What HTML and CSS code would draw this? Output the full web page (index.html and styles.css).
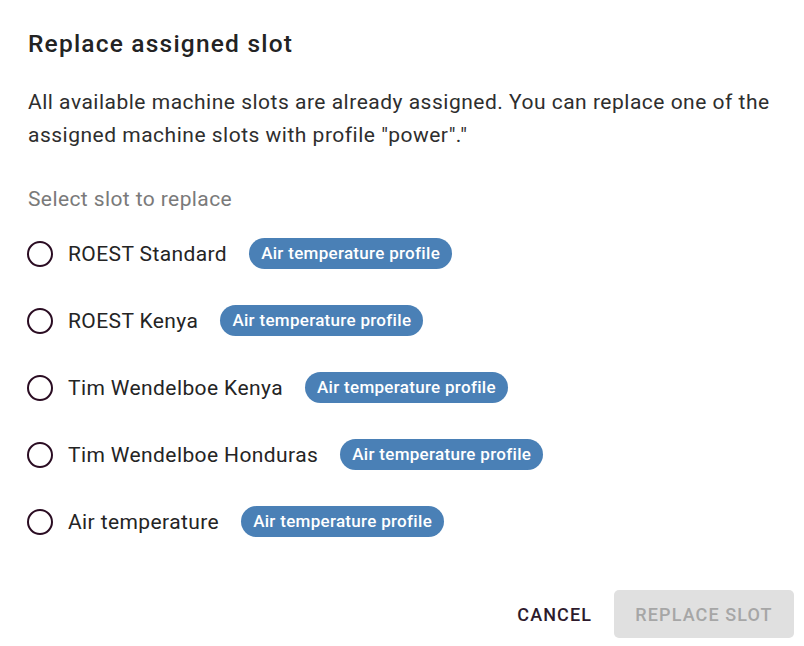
FILE: index.html
```html
<!DOCTYPE html>
<html lang="en">
<head>
<meta charset="utf-8">
<title>Replace assigned slot</title>
<link rel="stylesheet" href="styles.css">
</head>
<body>
<div class="dialog">
  <h2 class="title">Replace assigned slot</h2>
  <p class="text">All available machine slots are already assigned. You can replace one of the assigned machine slots with profile "power"."</p>
  <div class="label">Select slot to replace</div>
  <div class="options">
    <label class="option"><span class="radio"></span><span class="name">ROEST Standard</span><span class="chip">Air temperature profile</span></label>
    <label class="option"><span class="radio"></span><span class="name">ROEST Kenya</span><span class="chip">Air temperature profile</span></label>
    <label class="option"><span class="radio"></span><span class="name">Tim Wendelboe Kenya</span><span class="chip">Air temperature profile</span></label>
    <label class="option"><span class="radio"></span><span class="name">Tim Wendelboe Honduras</span><span class="chip">Air temperature profile</span></label>
    <label class="option"><span class="radio"></span><span class="name">Air temperature</span><span class="chip">Air temperature profile</span></label>
  </div>
  <div class="actions">
    <button class="btn btn-text">CANCEL</button>
    <button class="btn btn-disabled" disabled>REPLACE SLOT</button>
  </div>
</div>
</body>
</html>
```
FILE: styles.css
```css
html, body {
  margin: 0;
  padding: 0;
  background: #fff;
}
body {
  font-family: Roboto, "Noto Sans", sans-serif;
  color: rgba(0, 0, 0, 0.87);
}
.dialog {
  padding: 28px 10px 9px 28px;
  display: flex;
  flex-direction: column;
}
.title {
  margin: 0;
  font-size: 24.5px;
  font-weight: 500;
  letter-spacing: 1.2px;
  line-height: 32px;
  color: #232323;
}
.text {
  margin: 26px 0 0;
  font-size: 21px;
  letter-spacing: 0.5px;
  line-height: 33px;
  color: #2e2e2e;
}
.label {
  margin-top: 31px;
  font-size: 21px;
  letter-spacing: 0.4px;
  line-height: 33px;
  color: #7a7a7a;
}
.options {
  display: flex;
  flex-direction: column;
  gap: 34px;
  margin-top: 21px;
}
.option {
  display: flex;
  align-items: center;
  height: 33px;
}
.radio {
  width: 22px;
  height: 22px;
  border: 2.5px solid #2a0c22;
  border-radius: 50%;
  flex: none;
  margin-right: 15px;
  margin-left: -1px;
}
.name {
  font-size: 21px;
  letter-spacing: 0.4px;
  color: #242424;
  margin-right: 22px;
}
.chip {
  background: #4a80b6;
  color: #fff;
  font-size: 17px;
  font-weight: 500;
  letter-spacing: 0.3px;
  height: 31px;
  line-height: 31px;
  padding: 0 12px;
  border-radius: 16px;
}
.actions {
  display: flex;
  justify-content: flex-end;
  align-items: center;
  gap: 12px;
  margin-top: 52px;
}
.btn {
  font-family: Roboto, sans-serif;
  font-size: 18px;
  font-weight: 500;
  letter-spacing: 1.1px;
  white-space: nowrap;
  border: none;
  border-radius: 5px;
  height: 48px;
  padding: 0 10px;
  background: transparent;
}
.btn-text {
  color: #2d1a2c;
}
.btn-disabled {
  background: #e0e0e0;
  color: #a6a6a6;
  width: 180px;
  padding: 0;
}
```
